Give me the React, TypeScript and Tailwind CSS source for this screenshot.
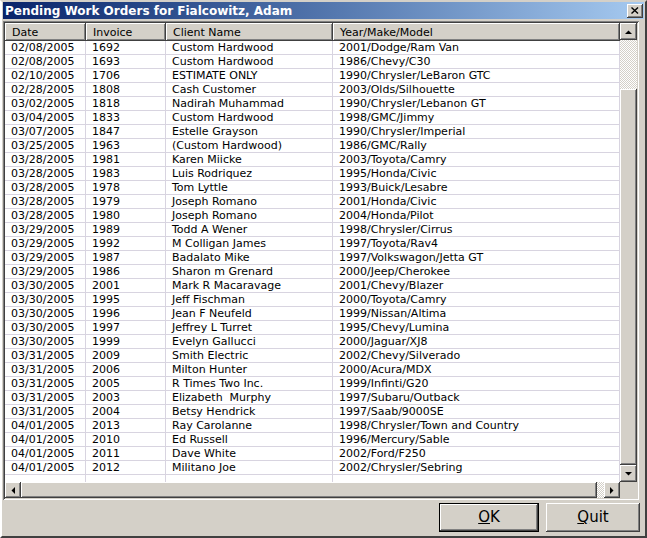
import React from 'react';

// --- DATA ---
const orders: [string, string, string, string][] = [
  ["02/08/2005", "1692", "Custom Hardwood", "2001/Dodge/Ram Van"],
  ["02/08/2005", "1693", "Custom Hardwood", "1986/Chevy/C30"],
  ["02/10/2005", "1706", "ESTIMATE ONLY", "1990/Chrysler/LeBaron GTC"],
  ["02/28/2005", "1808", "Cash Customer", "2003/Olds/Silhouette"],
  ["03/02/2005", "1818", "Nadirah Muhammad", "1990/Chrysler/Lebanon GT"],
  ["03/04/2005", "1833", "Custom Hardwood", "1998/GMC/Jimmy"],
  ["03/07/2005", "1847", "Estelle Grayson", "1990/Chrysler/Imperial"],
  ["03/25/2005", "1963", "(Custom Hardwood)", "1986/GMC/Rally"],
  ["03/28/2005", "1981", "Karen Miicke", "2003/Toyota/Camry"],
  ["03/28/2005", "1983", "Luis Rodriquez", "1995/Honda/Civic"],
  ["03/28/2005", "1978", "Tom Lyttle", "1993/Buick/Lesabre"],
  ["03/28/2005", "1979", "Joseph Romano", "2001/Honda/Civic"],
  ["03/28/2005", "1980", "Joseph Romano", "2004/Honda/Pilot"],
  ["03/29/2005", "1989", "Todd A Wener", "1998/Chrysler/Cirrus"],
  ["03/29/2005", "1992", "M Colligan James", "1997/Toyota/Rav4"],
  ["03/29/2005", "1987", "Badalato Mike", "1997/Volkswagon/Jetta GT"],
  ["03/29/2005", "1986", "Sharon m Grenard", "2000/Jeep/Cherokee"],
  ["03/30/2005", "2001", "Mark R Macaravage", "2001/Chevy/Blazer"],
  ["03/30/2005", "1995", "Jeff Fischman", "2000/Toyota/Camry"],
  ["03/30/2005", "1996", "Jean F Neufeld", "1999/Nissan/Altima"],
  ["03/30/2005", "1997", "Jeffrey L Turret", "1995/Chevy/Lumina"],
  ["03/30/2005", "1999", "Evelyn Gallucci", "2000/Jaguar/XJ8"],
  ["03/31/2005", "2009", "Smith Electric", "2002/Chevy/Silverado"],
  ["03/31/2005", "2006", "Milton Hunter", "2000/Acura/MDX"],
  ["03/31/2005", "2005", "R Times Two Inc.", "1999/Infinti/G20"],
  ["03/31/2005", "2003", "Elizabeth  Murphy", "1997/Subaru/Outback"],
  ["03/31/2005", "2004", "Betsy Hendrick", "1997/Saab/9000SE"],
  ["04/01/2005", "2013", "Ray Carolanne", "1998/Chrysler/Town and Country"],
  ["04/01/2005", "2010", "Ed Russell", "1996/Mercury/Sable"],
  ["04/01/2005", "2011", "Dave White", "2002/Ford/F250"],
  ["04/01/2005", "2012", "Militano Joe", "2002/Chrysler/Sebring"],
];

const headers = ["Date", "Invoice", "Client Name", "Year/Make/Model"];

const raised =
  "bg-[#d4d0c8] shadow-[inset_-1px_-1px_#404040,inset_1px_1px_#ffffff,inset_-2px_-2px_#808080,inset_2px_2px_#d4d0c8]";
const dither =
  "bg-[repeating-conic-gradient(#ffffff_0_25%,#d4d0c8_0_50%)] bg-[length:2px_2px]";

const Arrow = ({ dir }: { dir: "up" | "down" | "left" | "right" }) => {
  const pts = {
    up: "0,4 7,4 3.5,0.5",
    down: "0,0 7,0 3.5,3.5",
    left: "4,0 4,7 0.5,3.5",
    right: "0,0 0,7 3.5,3.5",
  }[dir];
  const vert = dir === "up" || dir === "down";
  return (
    <svg width={vert ? 7 : 4} height={vert ? 4 : 7} viewBox={vert ? "0 0 7 4" : "0 0 4 7"}>
      <polygon points={pts} fill="#000" />
    </svg>
  );
};

export default function App() {
  return (
    <div className="w-[647px] h-[538px] bg-[#d4d0c8] border-2 border-t-[#d4d0c8] border-l-[#ffffff] border-r-[#404040] border-b-[#404040] flex flex-col font-['DejaVu_Sans',sans-serif] text-[11px] text-black overflow-hidden">
      {/* TITLE BAR */}
      <div className="h-[17px] ml-px mr-px flex items-center justify-between bg-gradient-to-r from-[#0a246a] to-[#a6caf0] pl-[2px] pr-[1px]">
        <span className="text-white font-bold text-[12px] leading-none whitespace-nowrap">
          Pending Work Orders for Fialcowitz, Adam
        </span>
        <div className={`w-[16px] h-[14px] flex items-center justify-center ${raised}`}>
          <svg width="8" height="7" viewBox="0 0 8 7">
            <path d="M0.5 0.5 L7 6.5 M7 0.5 L0.5 6.5" stroke="#000" strokeWidth="1.4" />
          </svg>
        </div>
      </div>

      {/* GRID FRAME */}
      <div className="mt-[2px] ml-px w-[636px] h-[479px] p-[2px] bg-[#d4d0c8] shadow-[inset_1px_1px_#808080,inset_-1px_-1px_#ffffff,inset_2px_2px_#404040,inset_-2px_-2px_#d4d0c8]">
        <div className="flex h-[459px]">
          {/* table */}
          <div className="w-[615px] flex flex-col bg-white overflow-hidden">
            <div className="grid grid-cols-[81px_80px_167px_287px] h-[18px] shrink-0">
              {headers.map((h) => (
                <div
                  key={h}
                  className="bg-[#d4d0c8] shadow-[inset_-1px_-1px_#404040,inset_1px_1px_#ffffff,inset_-2px_-2px_#808080] pl-[7px] flex items-center leading-none whitespace-nowrap"
                >
                  {h}
                </div>
              ))}
            </div>
            {orders.map((row, i) => (
              <div key={i} className="grid grid-cols-[81px_80px_167px_287px] h-[14px] shrink-0">
                {row.map((cell, j) => (
                  <div
                    key={j}
                    className="border-r border-b border-[#d8d4e0] pl-[6px] pt-px leading-[12px] whitespace-pre overflow-hidden"
                  >
                    {cell}
                  </div>
                ))}
              </div>
            ))}
            <div className="grid grid-cols-[81px_80px_167px_287px] flex-1">
              <div className="border-r border-[#d8d4e0]" />
              <div className="border-r border-[#d8d4e0]" />
              <div className="border-r border-[#d8d4e0]" />
              <div className="border-r border-[#d8d4e0]" />
            </div>
          </div>

          {/* vertical scrollbar */}
          <div className="w-[17px] flex flex-col">
            <div className={`h-[17px] flex items-center justify-center ${raised}`}>
              <Arrow dir="up" />
            </div>
            <div className={`h-[49px] ${dither}`} />
            <div className={`flex-1 ${raised}`} />
            <div className={`h-[17px] flex items-center justify-center ${raised}`}>
              <Arrow dir="down" />
            </div>
          </div>
        </div>

        {/* horizontal scrollbar */}
        <div className="flex h-[16px]">
          <div className={`w-[16px] flex items-center justify-center ${raised}`}>
            <Arrow dir="left" />
          </div>
          <div className={`w-[576px] ${raised}`} />
          <div className={`w-[7px] ${dither}`} />
          <div className={`w-[16px] flex items-center justify-center ${raised}`}>
            <Arrow dir="right" />
          </div>
          <div className="w-[17px] bg-[#d4d0c8]" />
        </div>
      </div>

      {/* BUTTONS */}
      <div className="flex justify-end gap-[7px] mt-[3px] pr-[5px]">
        <button className="w-[100px] h-[29px] border border-black bg-[#d4d0c8]">
          <div className={`w-full h-full flex items-center justify-center text-[15px] ${raised}`}>
            <span><span className="underline">O</span>K</span>
          </div>
        </button>
        <button className={`w-[94px] h-[29px] flex items-center justify-center text-[15px] ${raised}`}>
          <span><span className="underline">Q</span>uit</span>
        </button>
      </div>
    </div>
  );
}
